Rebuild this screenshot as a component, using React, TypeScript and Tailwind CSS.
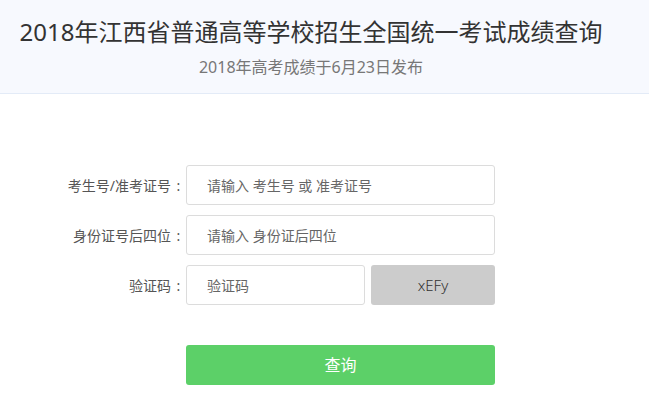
const FONT = '[font-family:"Noto_Sans","Noto_Sans_CJK_SC",sans-serif]'

function Row({ label, children }: { label: string; children: React.ReactNode }) {
  return (
    <div className="flex items-center">
      <label className="w-[186px] shrink-0 text-right text-[14px] text-[#555]">
        {label}
        <span className="inline-block w-[15px] text-center">:</span>
      </label>
      {children}
    </div>
  )
}

const inputCls =
  'h-10 rounded-[3px] border border-[#dcdcdc] bg-white px-[20px] text-[14px] text-[#333] outline-none placeholder:text-[#666]'

export default function App() {
  return (
    <div className={`min-h-[415px] bg-white ${FONT}`}>
      <div className="h-[94px] border-b border-[#e3ebf7] bg-[#f7f9fe] pr-[27px] text-center">
        <h1 className="pt-[16px] text-[24px] leading-[32px] text-[#333]">2018年江西省普通高等学校招生全国统一考试成绩查询</h1>
        <p className="mt-[8px] text-[16px] leading-[22px] text-[#777]">2018年高考成绩于6月23日发布</p>
      </div>

      <form className="flex flex-col gap-[10px] pt-[71px]" onSubmit={(e) => e.preventDefault()}>
        <Row label="考生号/准考证号">
          <input className={`${inputCls} w-[309px]`} placeholder="请输入 考生号 或 准考证号" />
        </Row>
        <Row label="身份证号后四位">
          <input className={`${inputCls} w-[309px]`} placeholder="请输入 身份证后四位" />
        </Row>
        <Row label="验证码">
          <div className="flex gap-[6px]">
            <input className={`${inputCls} w-[179px]`} placeholder="验证码" />
            <div className="grid h-10 w-[124px] place-items-center rounded-[3px] bg-[#cccccc] text-[15px] font-light text-[#333]">xEFy</div>
          </div>
        </Row>
        <div className="mt-[30px] pl-[186px]">
          <button type="submit" className="h-10 w-[309px] rounded-[3px] bg-[#5cd068] text-[16px] text-white">查询</button>
        </div>
      </form>
    </div>
  )
}
